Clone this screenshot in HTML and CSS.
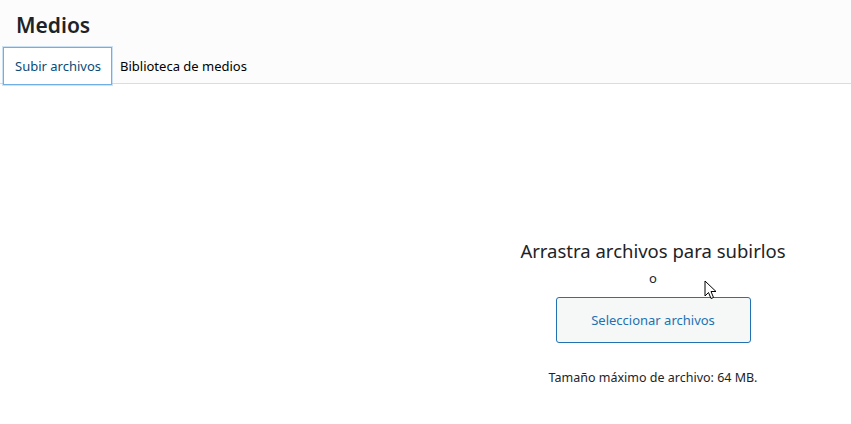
FILE: index.html
```html
<!DOCTYPE html>
<html lang="es">
<head>
  <meta charset="UTF-8">
  <title>Medios</title>
  <meta name="viewport" content="width=device-width, initial-scale=1.0">
  <link rel="stylesheet" href="styles.css">
</head>
<body>
  <div class="media-header">
    <h1 class="media-title">Medios</h1>
    <div class="media-tabs">
      <button class="media-tab active">Subir archivos</button>
      <button class="media-tab">Biblioteca de medios</button>
    </div>
  </div>

  <div class="media-content">
    <div class="media-spacer"></div>
    <div class="uploader">
      <p class="drop-title">Arrastra archivos para subirlos</p>
      <p class="drop-or">o</p>
      <button class="select-button">Seleccionar archivos</button>
      <p class="max-size">Tamaño máximo de archivo: 64 MB.</p>
      <svg class="cursor" width="14" height="22" viewBox="0 0 14 22">
        <path d="M1 1 L1 16 L4.5 12.5 L7 18.5 L9.5 17.5 L7 11.5 L12 11.5 Z" fill="#fff" stroke="#000" stroke-width="1"/>
      </svg>
    </div>
  </div>
</body>
</html>
```

FILE: styles.css
```css
* {
  box-sizing: border-box;
}
body {
  font-family: "Noto Sans", "Open Sans", sans-serif;
  background-color: #fff;
  color: #1d2327;
  margin: 0;
  padding: 0;
}
.media-header {
  background-color: #fcfcfc;
  border-bottom: 1px solid #dcdcde;
  height: 84px;
}
.media-title {
  font-size: 21px;
  font-weight: 600;
  margin: 0;
  padding: 9px 16px 0;
  line-height: 32px;
}
.media-tabs {
  display: flex;
  padding-left: 3px;
  margin-top: 6px;
}
.media-tab {
  font-family: inherit;
  font-size: 13px;
  color: #000;
  background: none;
  border: 1px solid transparent;
  height: 38px;
  padding: 0 8px 0 7px;
  cursor: pointer;
}
.media-tab.active {
  color: #0a4b78;
  background-color: #fff;
  border-color: #72aee6;
  padding: 0 10px 0 11px;
  box-shadow: 0 0 0 1px rgba(114, 174, 230, 0.35);
}
.media-content {
  display: flex;
}
.media-spacer {
  width: 455px;
}
.uploader {
  position: relative;
  flex: 1;
  display: flex;
  flex-direction: column;
  align-items: center;
  padding-top: 152px;
}
.drop-title {
  font-size: 18.5px;
  margin: 0;
  line-height: 30px;
}
.drop-or {
  font-size: 13px;
  margin: 2px 0 0;
  line-height: 20px;
}
.select-button {
  font-family: inherit;
  font-size: 13px;
  color: #2271b1;
  background-color: #f6f7f7;
  border: 1px solid #2271b1;
  border-radius: 3px;
  width: 195px;
  height: 46px;
  margin-top: 9px;
  cursor: pointer;
}
.max-size {
  font-size: 12.5px;
  margin: 25px 0 0;
  line-height: 20px;
}
.cursor {
  position: absolute;
  left: 249px;
  top: 196px;
}
```
